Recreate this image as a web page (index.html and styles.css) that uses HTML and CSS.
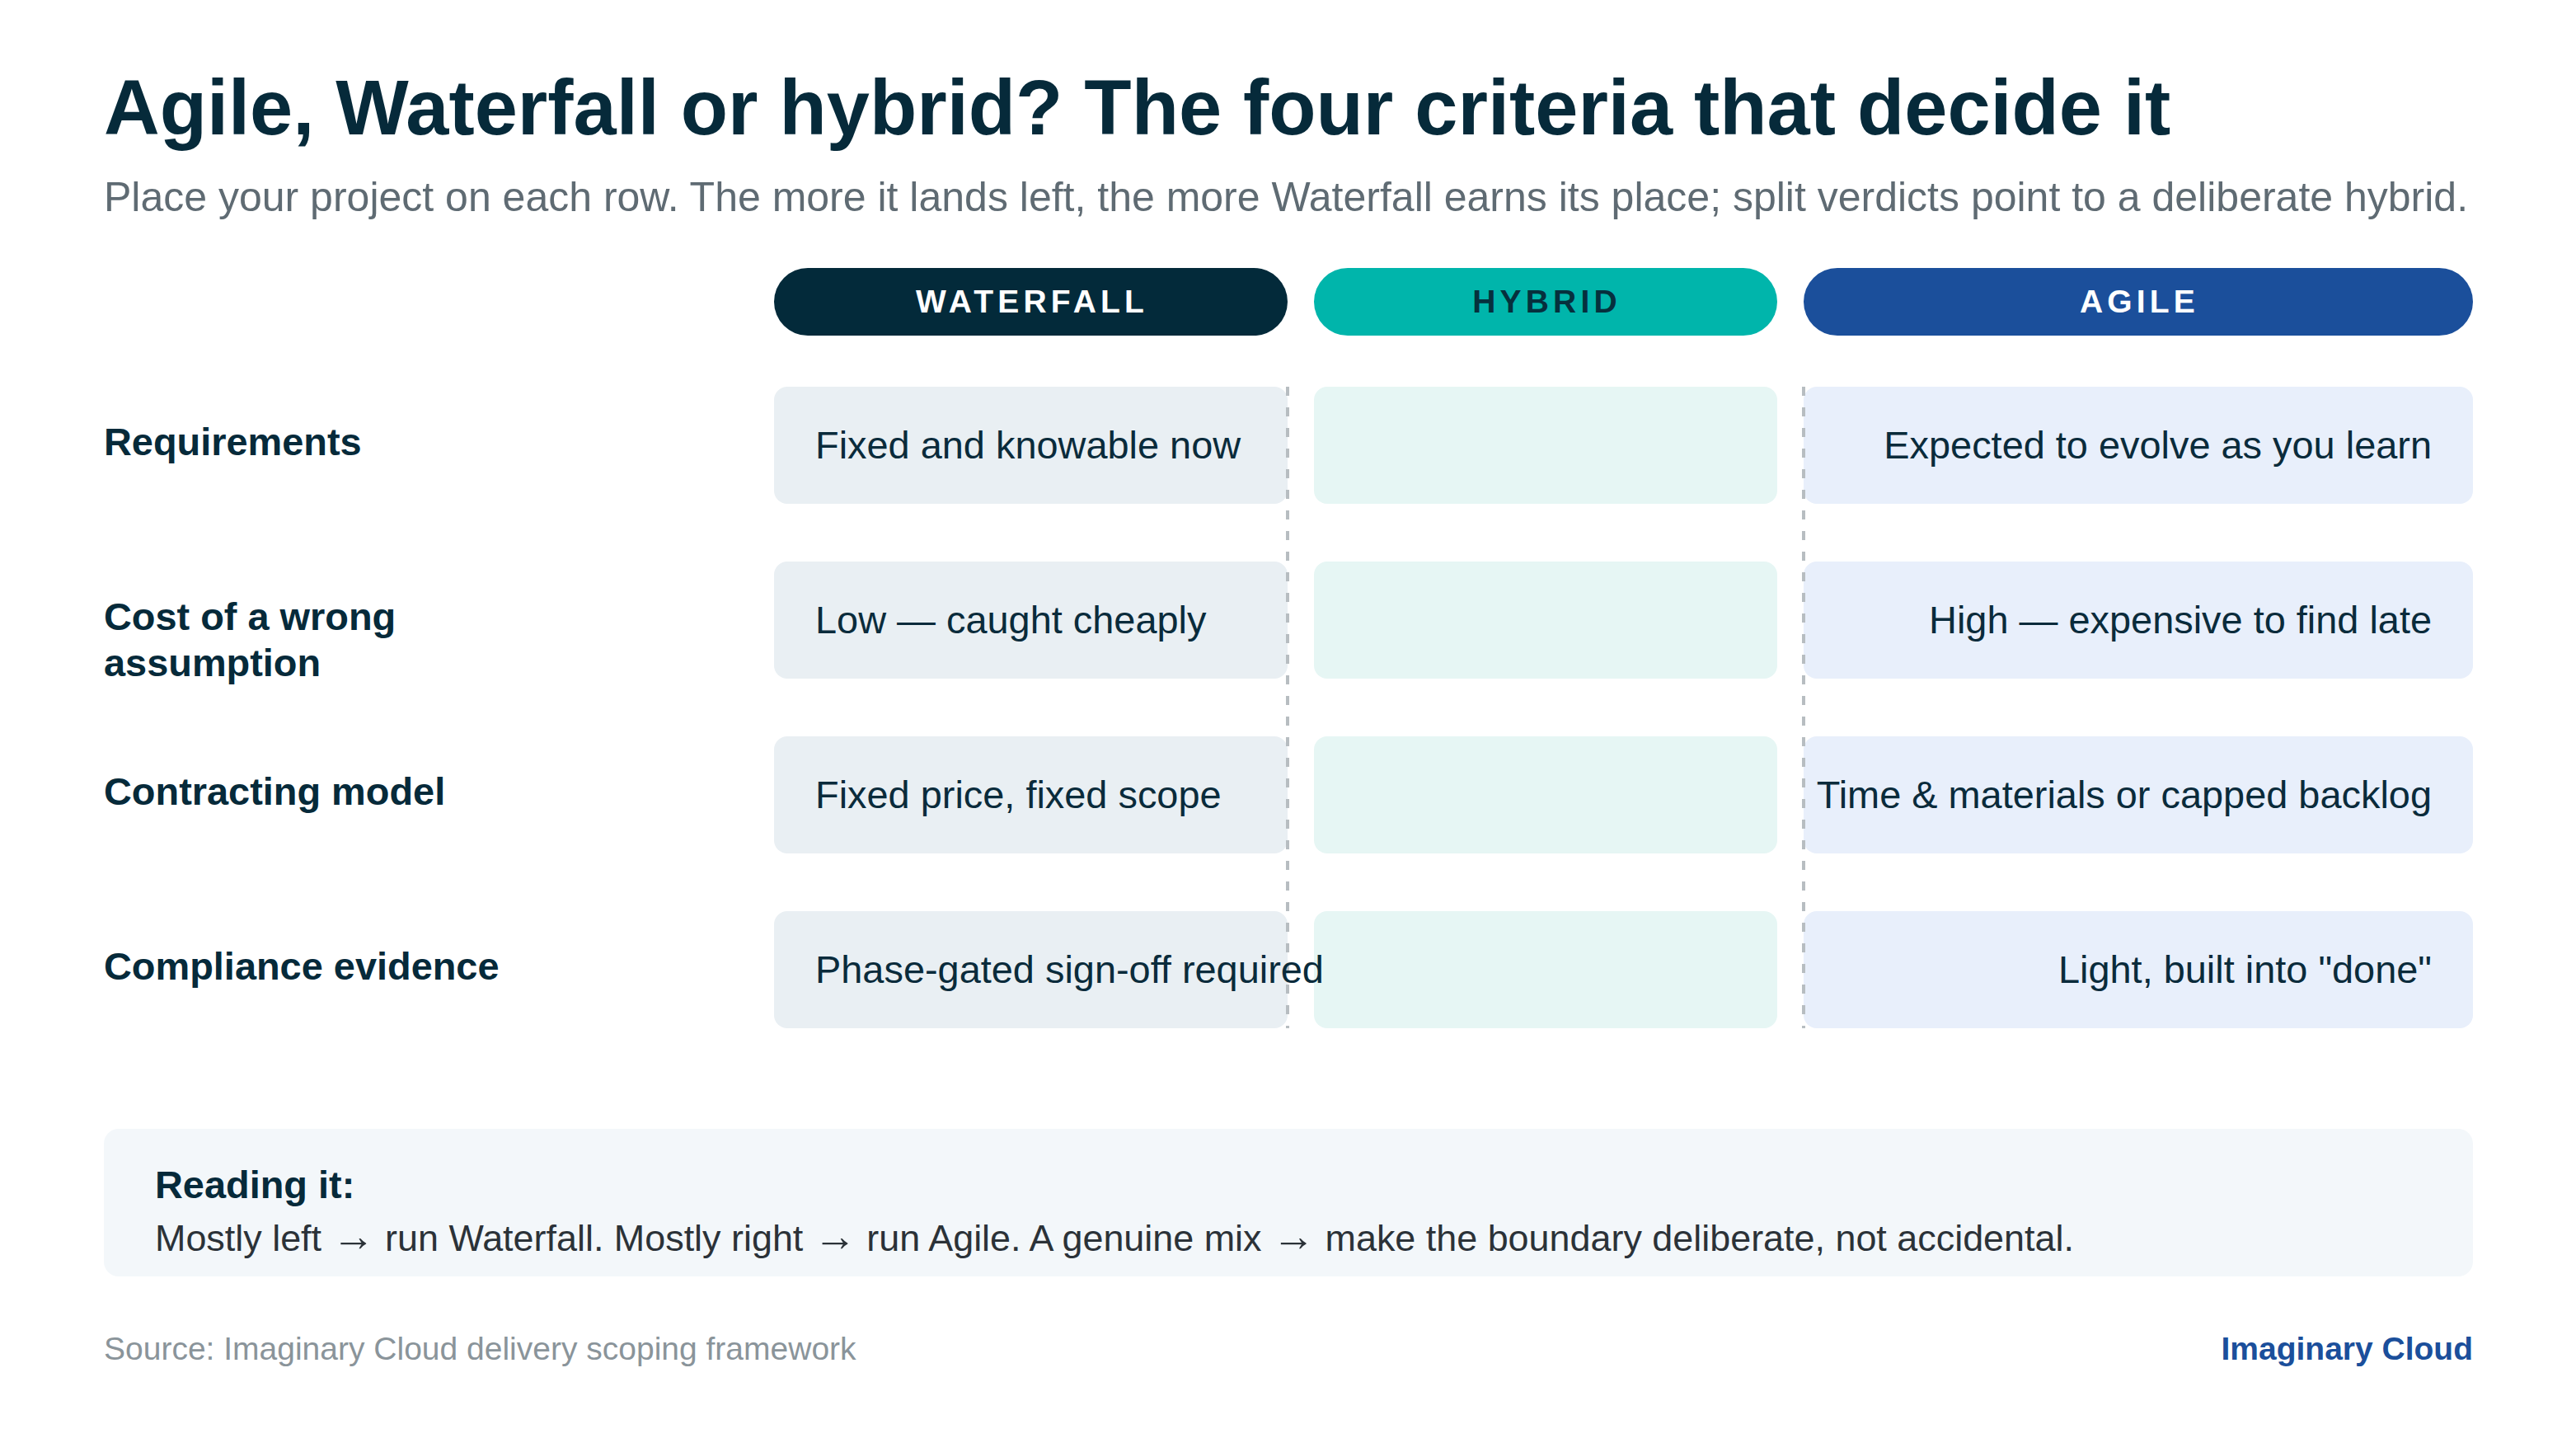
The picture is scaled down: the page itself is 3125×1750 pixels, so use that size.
FILE: index.html
```html
<!DOCTYPE html>
<html lang="en">
<head>
<meta charset="utf-8">
<title>Agile, Waterfall or hybrid?</title>
<link rel="stylesheet" href="styles.css">
</head>
<body>
<main class="page">
  <h1 class="title">Agile, Waterfall or hybrid? The four criteria that decide it</h1>
  <p class="subtitle">Place your project on each row. The more it lands left, the more Waterfall earns its place; split verdicts point to a deliberate hybrid.</p>

  <div class="matrix-head">
    <div class="spacer"></div>
    <div class="pill pill-waterfall">WATERFALL</div>
    <div class="pill pill-hybrid">HYBRID</div>
    <div class="pill pill-agile">AGILE</div>
  </div>

  <div class="matrix">
    <div class="label">Requirements</div>
    <div class="cell cell-waterfall"><span class="txt">Fixed and knowable now</span></div>
    <div class="cell cell-hybrid"></div>
    <div class="cell cell-agile"><span class="txt">Expected to evolve as you learn</span></div>

    <div class="label">Cost of a wrong assumption</div>
    <div class="cell cell-waterfall"><span class="txt">Low — caught cheaply</span></div>
    <div class="cell cell-hybrid"></div>
    <div class="cell cell-agile"><span class="txt">High — expensive to find late</span></div>

    <div class="label">Contracting model</div>
    <div class="cell cell-waterfall"><span class="txt">Fixed price, fixed scope</span></div>
    <div class="cell cell-hybrid"></div>
    <div class="cell cell-agile"><span class="txt">Time &amp; materials or capped backlog</span></div>

    <div class="label">Compliance evidence</div>
    <div class="cell cell-waterfall"><span class="txt">Phase-gated sign-off required</span></div>
    <div class="cell cell-hybrid"></div>
    <div class="cell cell-agile"><span class="txt">Light, built into "done"</span></div>
  </div>

  <section class="reading">
    <h2 class="reading-title">Reading it:</h2>
    <p class="reading-body">Mostly left <span class="arrow">→</span> run Waterfall. Mostly right <span class="arrow">→</span> run Agile. A genuine mix <span class="arrow">→</span> make the boundary deliberate, not accidental.</p>
  </section>

  <footer class="footer">
    <span class="source">Source: Imaginary Cloud delivery scoping framework</span>
    <span class="brand">Imaginary Cloud</span>
  </footer>
</main>
</body>
</html>
```

FILE: styles.css
```css
html, body {
  margin: 0;
  padding: 0;
  background: #ffffff;
}

body {
  font-family: "Liberation Sans", Arial, sans-serif;
  color: #0a2b3b;
}

.page {
  width: 3125px;
  height: 1750px;
  box-sizing: border-box;
  padding: 79px 125px 0 126px;
}

.title {
  margin: 0;
  font-size: 93.75px;
  line-height: 1.1;
  font-weight: 700;
  color: #062a3a;
  white-space: nowrap;
}

.subtitle {
  margin: 27px 0 0;
  font-size: 50px;
  line-height: 60px;
  color: #5f6b73;
  white-space: nowrap;
}

.matrix-head,
.matrix {
  display: grid;
  grid-template-columns: 781px 623px 562px 812px;
  column-gap: 32px;
}

.matrix-head {
  margin-top: 56px;
}

.pill {
  height: 82px;
  border-radius: 41px;
  display: flex;
  align-items: center;
  justify-content: center;
  font-size: 39px;
  font-weight: 700;
  letter-spacing: 5.2px;
  text-indent: 3px;
}

.pill-waterfall {
  background: #032a3a;
  color: #ffffff;
}

.pill-hybrid {
  background: #00b5ab;
  color: #06303d;
}

.pill-agile {
  background: #1b4f9b;
  color: #ffffff;
}

.matrix {
  position: relative;
  margin-top: 62px;
  grid-auto-rows: 142px;
  row-gap: 70px;
}

.matrix::before,
.matrix::after {
  content: "";
  position: absolute;
  top: 0;
  bottom: 0;
  width: 4px;
  background: repeating-linear-gradient(to bottom, #b7bdc1 0 11px, transparent 11px 25px);
  z-index: 1;
}

.matrix::before {
  left: 1434px;
}

.matrix::after {
  left: 2060px;
}

.label {
  padding-top: 39px;
  padding-right: 230px;
  font-size: 46.9px;
  line-height: 1.2;
  font-weight: 700;
  color: #062a3a;
}

.cell {
  display: flex;
  align-items: center;
  padding: 0 50px;
  border-radius: 16px;
  white-space: nowrap;
  font-size: 46.9px;
  color: #0a2b3b;
}

.txt {
  position: relative;
  z-index: 2;
  flex: none;
}

.cell-waterfall {
  background: #e9eff3;
  justify-content: flex-start;
}

.cell-hybrid {
  background: #e6f6f4;
}

.cell-agile {
  background: #e8effb;
  justify-content: flex-end;
}

.reading {
  margin-top: 122px;
  background: #f3f7fa;
  border-radius: 18px;
  padding: 40px 62px 19px;
}

.reading-title {
  margin: 0;
  font-size: 46.9px;
  line-height: 1.2;
  font-weight: 700;
  color: #062a3a;
}

.reading-body {
  margin: 10px 0 0;
  font-size: 44.9px;
  line-height: 1.2;
  color: #2b3238;
  white-space: nowrap;
}

.arrow {
  font-size: 1.16em;
  line-height: 0;
}

.footer {
  margin-top: 64px;
  display: flex;
  justify-content: space-between;
  align-items: center;
  font-size: 39px;
  line-height: 47px;
}

.source {
  color: #8a949a;
}

.brand {
  font-weight: 700;
  color: #1b4f9b;
}
```
